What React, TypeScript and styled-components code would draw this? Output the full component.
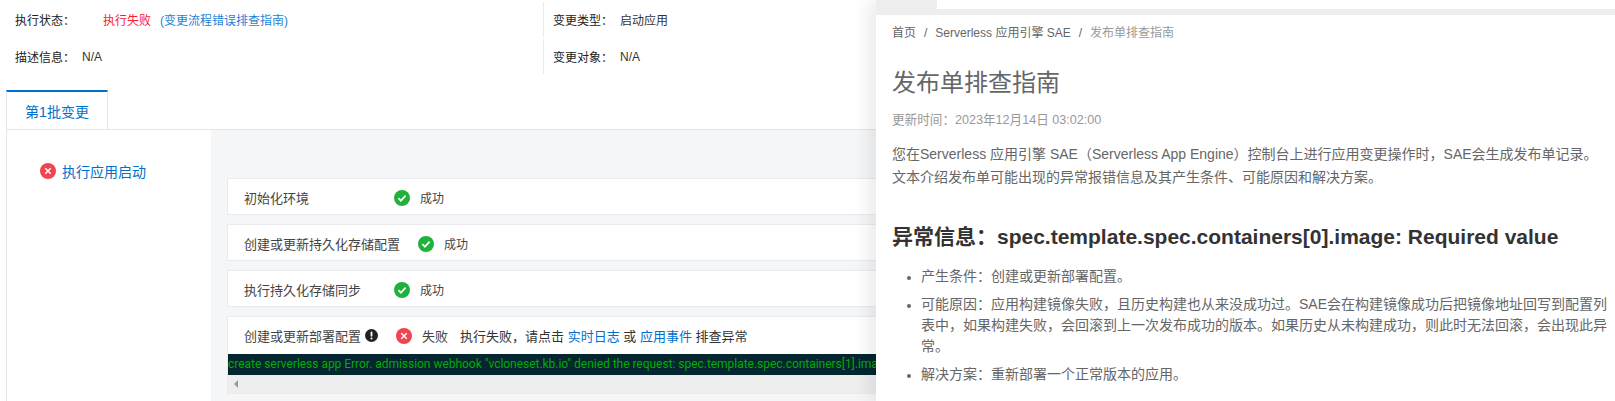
import React from "react";
import styled, { createGlobalStyle } from "styled-components";

const GlobalStyle = createGlobalStyle`
  html, body {
    margin: 0;
    padding: 0;
    background: #fff;
  }
  body {
    font-family: "Liberation Sans", "Noto Sans CJK SC", sans-serif;
  }
`;

const Page = styled.div`
  position: relative;
  width: 1615px;
  height: 401px;
  overflow: hidden;
  background: #fff;
`;

const InfoGrid = styled.div`
  display: grid;
  grid-template-columns: 543px 1fr;
  grid-auto-rows: 35px;
  row-gap: 2px;
  padding-top: 2px;
`;

const InfoCell = styled.div<{ $divided?: boolean }>`
  display: flex;
  align-items: center;
  padding-left: ${(props) => (props.$divided ? "9px" : "15px")};
  border-left: ${(props) => (props.$divided ? "1px solid #e9ebf1" : "none")};
  font-size: 12px;
  color: #333;
`;

const InfoLabel = styled.span`
  color: #222;
  margin-right: 7px;
`;

const FailText = styled.span`
  margin-left: 21px;
  color: #f5222d;
`;

const GuideLink = styled.a`
  margin-left: 9px;
  color: #1f7fd6;
  text-decoration: none;
`;

const TabBar = styled.div`
  display: flex;
  height: 39px;
  margin: 16px 0 0 6px;
  border-bottom: 1px solid #e3e5ec;
`;

const Tab = styled.div`
  display: flex;
  align-items: center;
  justify-content: center;
  box-sizing: border-box;
  width: 102px;
  height: 39px;
  border: 1px solid #e3e5ec;
  border-top: 2px solid #0070cc;
  border-bottom: none;
  font-size: 14px;
  color: #0070cc;
`;

const ChangeBody = styled.div`
  display: flex;
  height: 271px;
  margin-left: 6px;
  border-left: 1px solid #e3e5ec;
`;

const Sidebar = styled.div`
  display: flex;
  align-items: flex-start;
  gap: 6px;
  box-sizing: border-box;
  width: 204px;
  padding: 33px 0 0 33px;
  font-size: 14px;
  line-height: 19px;
  color: #0070cc;
`;

const StepList = styled.div`
  flex: 1;
  display: flex;
  flex-direction: column;
  gap: 9px;
  min-width: 0;
  padding: 48px 16px 0;
  background: #f5f6f8;
`;

const StepCard = styled.div`
  background: #fff;
  border: 1px solid #e9ebf1;
`;

const StepRow = styled.div`
  display: flex;
  align-items: center;
  box-sizing: border-box;
  height: 35px;
  padding: 2px 0 0 16px;
  font-size: 13px;
  color: #444;
`;

const StepName = styled.span`
  display: flex;
  align-items: center;
  gap: 4px;
  min-width: 132px;
  margin-right: 18px;
`;

const StepState = styled.span`
  margin-left: 10px;
  font-size: 12px;
`;

const FailState = styled.span`
  margin-left: 10px;
`;

const StepMessage = styled.span`
  margin-left: 12px;
  color: #333;
  a {
    color: #0070cc;
    text-decoration: none;
  }
`;

const LogText = styled.pre`
  margin: 2px 0 0;
  height: 21px;
  overflow: hidden;
  background: #03262f;
  color: #05aa05;
  font-family: Roboto, sans-serif;
  font-size: 12px;
  letter-spacing: -0.03px;
  line-height: 21px;
`;

const LogTrack = styled.div`
  display: flex;
  align-items: center;
  height: 18px;
  padding-left: 6px;
  background: #eeeeee;
`;

const TrackArrow = styled.span`
  width: 0;
  height: 0;
  border-style: solid;
  border-width: 4px 4px 4px 0;
  border-color: transparent #9a9a9a transparent transparent;
`;

const DocPanel = styled.aside`
  position: absolute;
  top: 0;
  right: 0;
  bottom: 0;
  width: 739px;
  background: #fff;
  box-shadow: -8px 0 16px rgba(0, 0, 0, 0.08);
`;

const PanelStrip = styled.div`
  height: 15px;
  background: #eeeeee;
`;

const StripTab = styled.div`
  height: 9px;
  margin-left: 61px;
  background: #fff;
`;

const DocContent = styled.div`
  padding: 0 2px 0 16px;
`;

const Breadcrumb = styled.div`
  display: flex;
  gap: 8px;
  margin-top: 10px;
  font-size: 12px;
  line-height: 17px;
  color: #666;
`;

const CrumbCurrent = styled.span`
  color: #999;
`;

const DocTitle = styled.h1`
  margin: 24px 0 0;
  font-size: 24px;
  font-weight: 400;
  line-height: 34px;
  color: #666;
`;

const UpdatedAt = styled.div`
  margin-top: 12px;
  font-size: 12.6px;
  line-height: 17px;
  color: #999;
`;

const Intro = styled.p`
  margin: 14px 12px 0 0;
  font-size: 14px;
  line-height: 23px;
  color: #666;
`;

const SectionTitle = styled.h2`
  margin: 34px 0 0;
  font-size: 21px;
  font-weight: 700;
  line-height: 28px;
  color: #333;
`;

const Notes = styled.ul`
  margin: 15px 0 0;
  padding: 0 0 0 29px;
  font-size: 14px;
  line-height: 21px;
  color: #666;
  li {
    margin-bottom: 7px;
  }
  li::marker {
    font-size: 12px;
    color: #666;
  }
`;

type IconKind = "ok" | "fail" | "warn";

const iconColors: Record<IconKind, string> = {
  ok: "#1fb13c",
  fail: "#f0444f",
  warn: "#222222",
};

const StatusIcon: React.FC<{ kind: IconKind; size?: number }> = ({ kind, size = 16 }) => (
  <svg width={size} height={size} viewBox="0 0 16 16" style={{ flex: "none" }}>
    <circle cx="8" cy="8" r="8" fill={iconColors[kind]} />
    {kind === "ok" && (
      <path d="M4.4 8.2l2.5 2.5 4.7-5" fill="none" stroke="#fff" strokeWidth="1.7" />
    )}
    {kind === "fail" && (
      <path d="M5.3 5.3l5.4 5.4M10.7 5.3l-5.4 5.4" fill="none" stroke="#fff" strokeWidth="1.5" />
    )}
    {kind === "warn" && (
      <>
        <rect x="6.9" y="3.2" width="2.2" height="6.2" rx="1" fill="#fff" />
        <circle cx="8" cy="11.6" r="1.25" fill="#fff" />
      </>
    )}
  </svg>
);

const okSteps = ["初始化环境", "创建或更新持久化存储配置", "执行持久化存储同步"];

const logLine =
  'create serverless app Error. admission webhook "vcloneset.kb.io" denied the request: spec.template.spec.containers[1].image: Required value';

const App: React.FC = () => {
  return (
    <Page>
      <GlobalStyle />
      <InfoGrid>
        <InfoCell>
          <InfoLabel>执行状态：</InfoLabel>
          <FailText>执行失败</FailText>
          <GuideLink href="#guide">(变更流程错误排查指南)</GuideLink>
        </InfoCell>
        <InfoCell $divided>
          <InfoLabel>变更类型：</InfoLabel>
          启动应用
        </InfoCell>
        <InfoCell>
          <InfoLabel>描述信息：</InfoLabel>
          N/A
        </InfoCell>
        <InfoCell $divided>
          <InfoLabel>变更对象：</InfoLabel>
          N/A
        </InfoCell>
      </InfoGrid>

      <TabBar>
        <Tab>第1批变更</Tab>
      </TabBar>

      <ChangeBody>
        <Sidebar>
          <StatusIcon kind="fail" />
          执行应用启动
        </Sidebar>
        <StepList>
          {okSteps.map((name) => (
            <StepCard key={name}>
              <StepRow>
                <StepName>{name}</StepName>
                <StatusIcon kind="ok" />
                <StepState>成功</StepState>
              </StepRow>
            </StepCard>
          ))}
          <StepCard>
            <StepRow>
              <StepName>
                创建或更新部署配置
                <StatusIcon kind="warn" size={13} />
              </StepName>
              <StatusIcon kind="fail" />
              <FailState>失败</FailState>
              <StepMessage>
                执行失败，请点击 <a href="#log">实时日志</a> 或 <a href="#event">应用事件</a> 排查异常
              </StepMessage>
            </StepRow>
            <LogText>{logLine}</LogText>
            <LogTrack>
              <TrackArrow />
            </LogTrack>
          </StepCard>
        </StepList>
      </ChangeBody>

      <DocPanel>
        <PanelStrip>
          <StripTab />
        </PanelStrip>
        <DocContent>
          <Breadcrumb>
            <span>首页</span>
            <span>/</span>
            <span>Serverless 应用引擎 SAE</span>
            <span>/</span>
            <CrumbCurrent>发布单排查指南</CrumbCurrent>
          </Breadcrumb>
          <DocTitle>发布单排查指南</DocTitle>
          <UpdatedAt>更新时间：2023年12月14日 03:02:00</UpdatedAt>
          <Intro>
            您在Serverless 应用引擎 SAE（Serverless App Engine）控制台上进行应用变更操作时，SAE会生成发布单记录。文本介绍发布单可能出现的异常报错信息及其产生条件、可能原因和解决方案。
          </Intro>
          <SectionTitle>异常信息：spec.template.spec.containers[0].image: Required value</SectionTitle>
          <Notes>
            <li>产生条件：创建或更新部署配置。</li>
            <li>
              可能原因：应用构建镜像失败，且历史构建也从来没成功过。SAE会在构建镜像成功后把镜像地址回写到配置列表中，如果构建失败，会回滚到上一次发布成功的版本。如果历史从未构建成功，则此时无法回滚，会出现此异常。
            </li>
            <li>解决方案：重新部署一个正常版本的应用。</li>
          </Notes>
        </DocContent>
      </DocPanel>
    </Page>
  );
};

export default App;
